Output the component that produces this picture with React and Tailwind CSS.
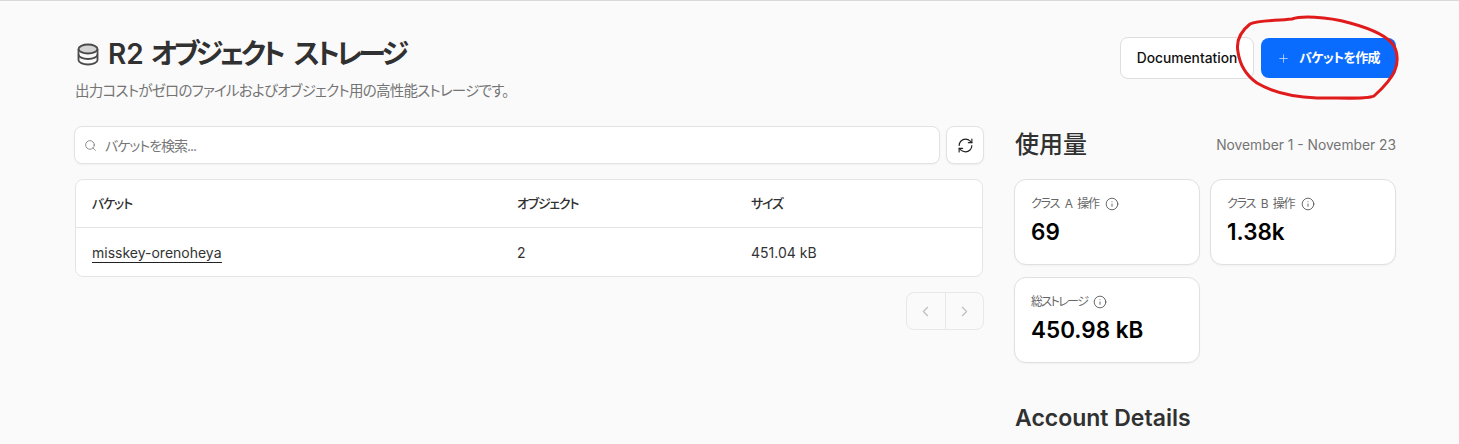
import React from "react";
import { Search, RefreshCw, Plus, Info, ChevronLeft, ChevronRight } from "lucide-react";

const font = "font-['Inter','Noto_Sans_CJK_JP',sans-serif] [font-feature-settings:'palt']";

function Stat({ label, value, labelClass }) {
  return (
    <div className="h-[86px] rounded-xl border border-[#e0e0e0] bg-white pl-4 pt-[15px] shadow-[0_1px_2px_rgba(0,0,0,0.04)]">
      <div className="flex h-[17px] items-center gap-[6px] text-[12px] leading-[17px] text-[#666]">
        <span className={labelClass}>{label}</span>
        <Info className="h-[14px] w-[14px] text-[#555]" strokeWidth={1.5} />
      </div>
      <div className="mt-[4px] text-[22.5px] font-semibold leading-[32px] text-black">{value}</div>
    </div>
  );
}

export default function App() {
  return (
    <div className={`${font} relative h-[444px] w-full overflow-hidden border-t border-[#d9d9d9] bg-[#fafafa] pl-[75px] pr-[63px] text-[#313131]`}>
      <header className="flex items-start justify-between pt-[35px]">
        <div>
          <div className="flex h-[36px] items-center gap-[9px]">
            <svg className="h-[24px] w-[24px]" viewBox="0 0 24 24" fill="none" stroke="#4a4a4a" strokeWidth="1.8">
              <ellipse cx="13" cy="7" rx="9.5" ry="4.5" fill="#d4d4d4" />
              <path d="M3.5 7v11c0 2.5 4.2 4.5 9.5 4.5s9.5-2 9.5-4.5V7" />
              <path d="M3.5 12.5c0 2.5 4.2 4.5 9.5 4.5s9.5-2 9.5-4.5" />
            </svg>
            <h1 className="text-[28px] font-semibold leading-[36px]">R2 <span className="tracking-[-3.6px] [word-spacing:8px]">オブジェクト ストレージ</span></h1>
          </div>
          <p className="mt-[8px] text-[14.5px] leading-[22px] tracking-[-0.75px] text-[#747474]">出力コストがゼロのファイルおよびオブジェクト用の高性能ストレージです。</p>
        </div>
        <div className="flex items-center gap-[7px] pt-px">
          <button className="h-[42px] w-[134px] rounded-lg border border-[#dedede] bg-white text-[13.8px] font-medium text-[#111]">Documentation</button>
          <button className="flex h-[40px] w-[135px] items-center justify-center gap-[9px] rounded-lg bg-[#0a6cff] text-[13px] font-semibold text-white">
            <Plus className="h-[13px] w-[13px] text-[#c2daff]" strokeWidth={1.5} />
            <span className="tracking-[-0.7px]">バケットを作成</span>
          </button>
        </div>
      </header>

      <main className="mt-[24px] flex gap-[31px]">
        <section className="w-[909px] shrink-0">
          <div className="-ml-px flex h-[38px] gap-[6px]">
            <div className="flex h-[38px] w-[866px] items-center gap-[8px] rounded-lg border border-[#e2e2e2] bg-white pl-[9px] shadow-[0_1px_2px_rgba(0,0,0,0.04)]">
              <Search className="h-[13px] w-[13px] text-[#777]" strokeWidth={1.5} />
              <span className="text-[14px] tracking-[-1px] text-[#777]">バケットを検索...</span>
            </div>
            <button className="flex h-[38px] w-[38px] items-center justify-center rounded-lg border border-[#e2e2e2] bg-white shadow-[0_1px_2px_rgba(0,0,0,0.06)]">
              <RefreshCw className="h-[17px] w-[17px] text-[#222]" strokeWidth={1.6} />
            </button>
          </div>

          <div className="mt-[15px] h-[98px] w-[908px] rounded-lg border border-[#e4e4e4] bg-white text-[14px]">
            <div className="grid h-[48px] grid-cols-[425px_234px_1fr] items-center border-b border-[#e4e4e4] pl-4 text-[13px] font-medium tracking-[-1.2px]">
              <div>バケット</div>
              <div>オブジェクト</div>
              <div>サイズ</div>
            </div>
            <div className="grid h-[48px] grid-cols-[425px_234px_1fr] items-center pl-4 text-[#333]">
              <div><a className="border-b border-[#222] pb-px">misskey-orenoheya</a></div>
              <div>2</div>
              <div>451.04 kB</div>
            </div>
          </div>

          <div className="mt-[15px] flex justify-end">
            <div className="flex h-[38px] w-[78px] rounded-lg border border-[#e8e8e8] text-[#bdbdbd]">
              <div className="flex flex-1 items-center justify-center border-r border-[#e8e8e8]">
                <ChevronLeft className="h-[17px] w-[17px]" strokeWidth={1.5} />
              </div>
              <div className="flex flex-1 items-center justify-center">
                <ChevronRight className="h-[17px] w-[17px]" strokeWidth={1.5} />
              </div>
            </div>
          </div>
        </section>

        <aside className="w-[381px] shrink-0">
          <div className="flex h-[38px] items-center justify-between">
            <h2 className="text-[24px] font-medium leading-[36px]">使用量</h2>
            <span className="text-[13.8px] text-[#747474]">November 1 - November 23</span>
          </div>
          <div className="-ml-px mt-[15px] grid w-[382px] grid-cols-[186px_186px] gap-x-[10px] gap-y-[12px]">
            <Stat label="クラス A 操作" value="69" labelClass="tracking-[-1.1px] [word-spacing:3px]" />
            <Stat label="クラス B 操作" value="1.38k" labelClass="tracking-[-1.1px] [word-spacing:3px]" />
            <Stat label="総ストレージ" value="450.98 kB" labelClass="tracking-[-1.6px]" />
          </div>
          <h2 className="mt-[39px] text-[23px] font-semibold leading-[32px]">Account Details</h2>
        </aside>
      </main>

      <svg className="pointer-events-none absolute left-0 top-[-1px] h-[444px] w-[1459px]" viewBox="0 0 1459 444" fill="none">
        <path
          d="M1292 19C1300 16 1325 16 1350 23C1372 29 1388 36 1394 46C1398 53 1398 63 1395 70C1391 80 1383 88 1374 96C1368 99 1350 98 1317 98C1295 97 1272 92 1257 83C1247 76 1240 66 1238 52C1236 42 1240 32 1250 24C1258 20 1275 21 1292 19Z"
          stroke="#e01b1b"
          strokeWidth="3"
          strokeLinejoin="round"
        />
      </svg>
    </div>
  );
}
